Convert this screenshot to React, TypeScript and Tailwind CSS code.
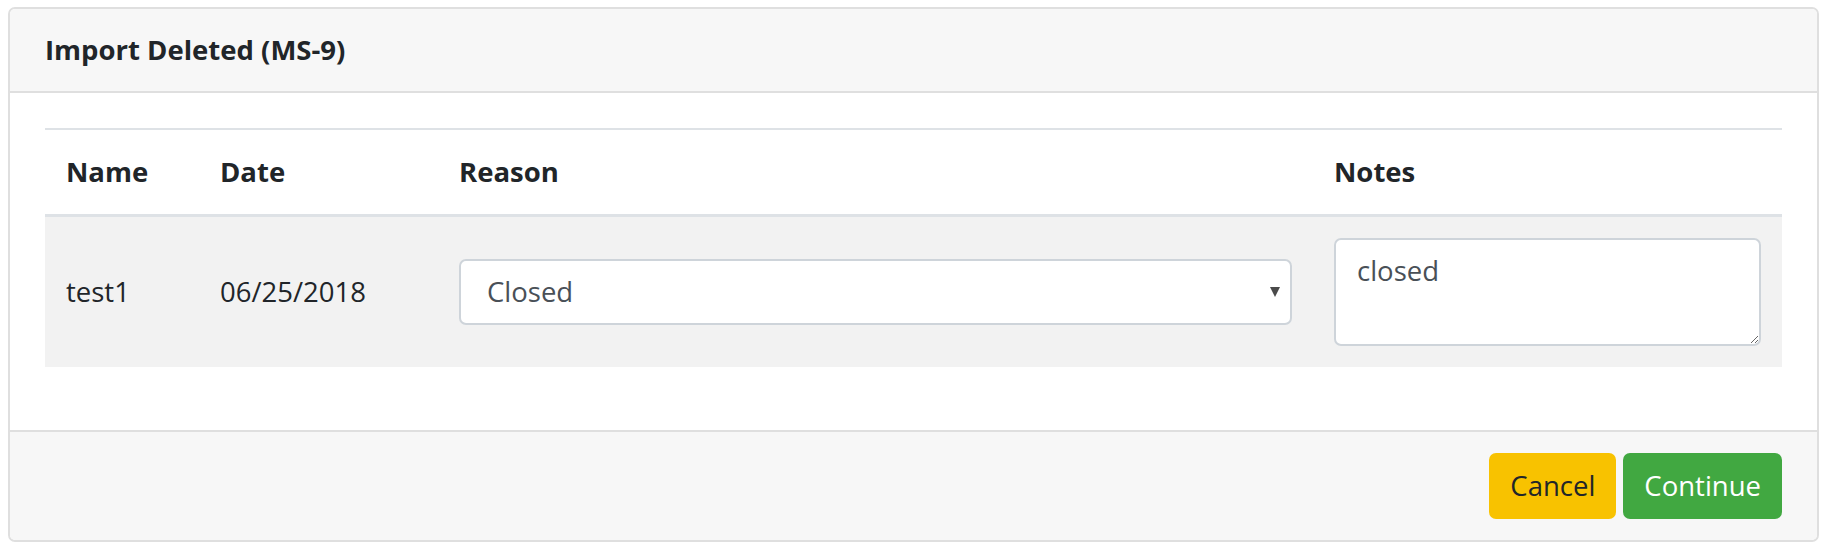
import React from "react";

const font = { fontFamily: '"Open Sans", "Noto Sans", sans-serif' };

export default function App() {
  return (
    <div className="bg-white w-[1828px] h-[556px] pt-[7px] pl-[8px]" style={font}>
      <div className="w-[1811px] border-2 border-[#dfdfdf] rounded-[7px] overflow-hidden text-[#212529] text-[27.5px] leading-[42px]">
        {/* Header */}
        <div className="bg-[#f7f7f7] px-[35px] py-[20px] border-b-2 border-[#dfdfdf]">
          <div className="font-bold">Import Deleted (MS-9)</div>
        </div>

        {/* Body */}
        <div className="bg-white px-[35px] pt-[35px] pb-[63px]">
          <table className="w-full border-collapse table-fixed">
            <colgroup>
              <col className="w-[154px]" />
              <col className="w-[239px]" />
              <col className="w-[875px]" />
              <col />
            </colgroup>
            <thead>
              <tr className="border-t-2 border-b-[3px] border-[#dee2e6]">
                <th className="text-left font-bold p-[21px] align-bottom">Name</th>
                <th className="text-left font-bold p-[21px] align-bottom">Date</th>
                <th className="text-left font-bold p-[21px] align-bottom">Reason</th>
                <th className="text-left font-bold p-[21px] align-bottom">Notes</th>
              </tr>
            </thead>
            <tbody>
              <tr className="bg-[#f2f2f2]">
                <td className="p-[21px] align-middle">test1</td>
                <td className="p-[21px] align-middle">06/25/2018</td>
                <td className="p-[21px] align-middle">
                  <div className="relative">
                    <select
                      defaultValue="Closed"
                      className="appearance-none w-full h-[66px] bg-white border-2 border-[#ced4da] rounded-[7px] pl-[26px] pr-[40px] text-[#495057] text-[27.5px] leading-[42px] outline-none"
                      style={font}
                    >
                      <option>Closed</option>
                    </select>
                    <svg
                      className="absolute right-[12px] top-[28px] pointer-events-none"
                      width="10"
                      height="10"
                      viewBox="0 0 10 10"
                    >
                      <polygon points="0,0 10,0 5,10" fill="#4a4a4a" />
                    </svg>
                  </div>
                </td>
                <td className="p-[21px] align-middle">
                  <textarea
                    readOnly
                    defaultValue="closed"
                    rows={2}
                    className="block w-full h-[108px] bg-white border-2 border-[#ced4da] rounded-[7px] px-[21px] py-[10px] text-[#495057] text-[27.5px] leading-[42px] resize-y outline-none"
                    style={font}
                  />
                </td>
              </tr>
            </tbody>
          </table>
        </div>

        {/* Footer */}
        <div className="bg-[#f7f7f7] border-t-2 border-[#dfdfdf] px-[35px] py-[21px] flex justify-end gap-[7px]">
          <button className="bg-[#f8c200] text-[#212529] rounded-[7px] px-[21px] py-[12px] leading-[42px] text-[27.5px]">
            Cancel
          </button>
          <button className="bg-[#41a841] text-white rounded-[7px] px-[21px] py-[12px] leading-[42px] text-[27.5px]">
            Continue
          </button>
        </div>
      </div>
    </div>
  );
}
